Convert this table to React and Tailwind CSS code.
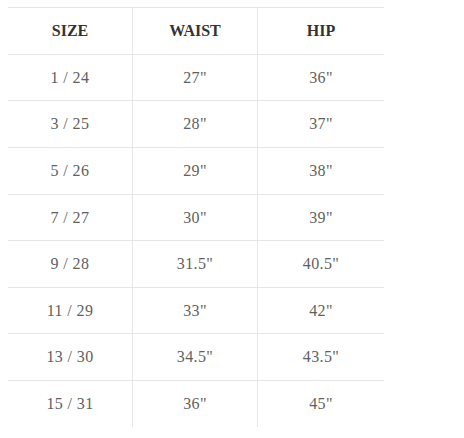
const rows = [
  ["1 / 24", '27"', '36"'],
  ["3 / 25", '28"', '37"'],
  ["5 / 26", '29"', '38"'],
  ["7 / 27", '30"', '39"'],
  ["9 / 28", '31.5"', '40.5"'],
  ["11 / 29", '33"', '42"'],
  ["13 / 30", '34.5"', '43.5"'],
  ["15 / 31", '36"', '45"'],
];

const heights = ["h-[46px]", "h-[47px]", "h-[47px]", "h-[46px]", "h-[47px]", "h-[46px]", "h-[47px]", "h-[47px]"];

export default function App() {
  return (
    <div className="w-[464px] h-[438px] bg-white pt-[7px] pl-[8px] font-['Liberation_Serif','Times_New_Roman',serif]">
      <div className="w-[376px] flex flex-col">
        <div className="h-[47px] flex border-t border-[#e6e6e6] text-[16px] font-bold text-[#333]">
          <div className="w-[124px] flex items-center justify-center">SIZE</div>
          <div className="w-[125px] flex items-center justify-center border-l border-[#e6e6e6]">WAIST</div>
          <div className="w-[127px] flex items-center justify-center border-l border-[#e6e6e6]">HIP</div>
        </div>
        {rows.map((r, i) => (
          <div key={i} className={`${heights[i]} flex border-t border-[#e6e6e6] text-[16px] text-[#5f5f5f] tracking-[0.4px]`}>
            <div className="w-[124px] flex items-center justify-center">{r[0]}</div>
            <div className="w-[125px] flex items-center justify-center border-l border-[#e6e6e6]">{r[1]}</div>
            <div className="w-[127px] flex items-center justify-center border-l border-[#e6e6e6]">{r[2]}</div>
          </div>
        ))}
      </div>
    </div>
  );
}
